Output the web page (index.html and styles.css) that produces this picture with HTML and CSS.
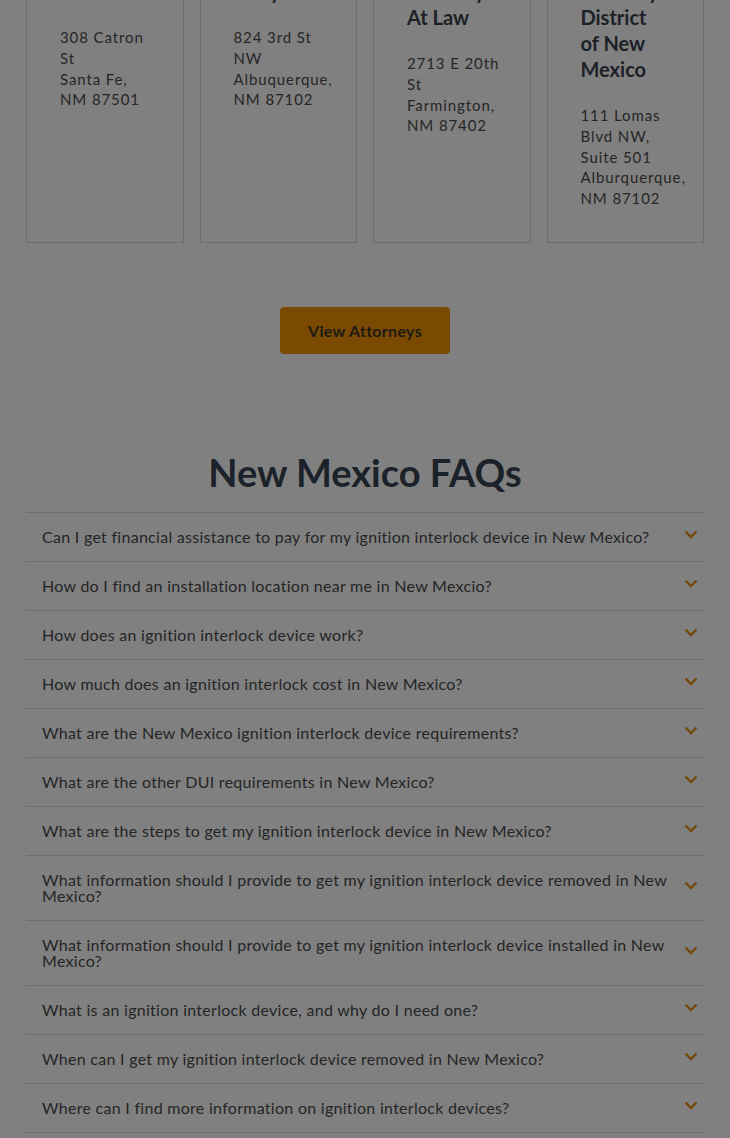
FILE: index.html
```html
<!DOCTYPE html>
<html lang="en">
<head>
<meta charset="utf-8">
<title>New Mexico Ignition Interlock</title>
<link rel="stylesheet" href="styles.css">
</head>
<body>
<main class="page">
  <section class="offices">
    <article class="card">
      <h3 class="card-title">Law Office</h3>
      <p class="addr"><span class="ln">308 Catron St</span><span class="ln">Santa Fe,</span><span class="ln">NM 87501</span></p>
    </article>
    <article class="card">
      <h3 class="card-title">DWI Lawyers</h3>
      <p class="addr"><span class="ln">824 3rd St NW</span><span class="ln">Albuquerque,</span><span class="ln">NM 87102</span></p>
    </article>
    <article class="card">
      <h3 class="card-title">Jones Attorney At Law</h3>
      <p class="addr"><span class="ln">2713 E 20th St</span><span class="ln">Farmington,</span><span class="ln">NM 87402</span></p>
    </article>
    <article class="card">
      <h3 class="card-title">US Attorney District of New Mexico</h3>
      <p class="addr"><span class="ln">111 Lomas Blvd NW, Suite 501</span><span class="ln">Alburquerque,</span><span class="ln">NM 87102</span></p>
    </article>
  </section>

  <div class="cta">
    <a class="btn" href="#">View Attorneys</a>
  </div>

  <section class="faqs">
    <h2 class="faqs-title">New Mexico FAQs</h2>
    <ul class="faq-list">
      <li class="faq"><span class="q">Can I get financial assistance to pay for my ignition interlock device in New Mexico?</span><svg class="chev" viewBox="0 0 14 9"><path d="M1.5 1.5 L7 7 L12.5 1.5"/></svg></li>
      <li class="faq"><span class="q">How do I find an installation location near me in New Mexcio?</span><svg class="chev" viewBox="0 0 14 9"><path d="M1.5 1.5 L7 7 L12.5 1.5"/></svg></li>
      <li class="faq"><span class="q">How does an ignition interlock device work?</span><svg class="chev" viewBox="0 0 14 9"><path d="M1.5 1.5 L7 7 L12.5 1.5"/></svg></li>
      <li class="faq"><span class="q">How much does an ignition interlock cost in New Mexico?</span><svg class="chev" viewBox="0 0 14 9"><path d="M1.5 1.5 L7 7 L12.5 1.5"/></svg></li>
      <li class="faq"><span class="q">What are the New Mexico ignition interlock device requirements?</span><svg class="chev" viewBox="0 0 14 9"><path d="M1.5 1.5 L7 7 L12.5 1.5"/></svg></li>
      <li class="faq"><span class="q">What are the other DUI requirements in New Mexico?</span><svg class="chev" viewBox="0 0 14 9"><path d="M1.5 1.5 L7 7 L12.5 1.5"/></svg></li>
      <li class="faq"><span class="q">What are the steps to get my ignition interlock device in New Mexico?</span><svg class="chev" viewBox="0 0 14 9"><path d="M1.5 1.5 L7 7 L12.5 1.5"/></svg></li>
      <li class="faq"><span class="q">What information should I provide to get my ignition interlock device removed in New Mexico?</span><svg class="chev" viewBox="0 0 14 9"><path d="M1.5 1.5 L7 7 L12.5 1.5"/></svg></li>
      <li class="faq"><span class="q">What information should I provide to get my ignition interlock device installed in New Mexico?</span><svg class="chev" viewBox="0 0 14 9"><path d="M1.5 1.5 L7 7 L12.5 1.5"/></svg></li>
      <li class="faq"><span class="q">What is an ignition interlock device, and why do I need one?</span><svg class="chev" viewBox="0 0 14 9"><path d="M1.5 1.5 L7 7 L12.5 1.5"/></svg></li>
      <li class="faq"><span class="q">When can I get my ignition interlock device removed in New Mexico?</span><svg class="chev" viewBox="0 0 14 9"><path d="M1.5 1.5 L7 7 L12.5 1.5"/></svg></li>
      <li class="faq"><span class="q">Where can I find more information on ignition interlock devices?</span><svg class="chev" viewBox="0 0 14 9"><path d="M1.5 1.5 L7 7 L12.5 1.5"/></svg></li>
    </ul>
  </section>
</main>
</body>
</html>
```

FILE: styles.css
```css
html, body {
  margin: 0;
  padding: 0;
  background: #808080;
}
body {
  font-family: "Lato", "Open Sans", sans-serif;
  color: #252525;
  overflow: hidden;
}
.page {
  padding: 0 26px;
}
.offices {
  display: grid;
  grid-template-columns: repeat(4, 1fr);
  column-gap: 16px;
  margin-top: -82px;
}
.card {
  border: 1px solid #6c6c6c;
  padding: 33px 29px 33px 33px;
  min-width: 0;
}
.card-title {
  max-width: 86px;
  margin: 0 0 23px;
  font-size: 20px;
  line-height: 26px;
  font-weight: 700;
  color: #1c2128;
}
.addr {
  margin: 0;
  font-size: 15px;
  line-height: 20.8px;
  letter-spacing: 0.9px;
  color: #262626;
}
.ln {
  display: block;
}
.cta {
  display: flex;
  justify-content: center;
  margin-top: 64px;
}
.btn {
  display: flex;
  align-items: center;
  justify-content: center;
  width: 170px;
  height: 47px;
  box-sizing: border-box;
  background: #7a4a02;
  border-radius: 4px;
  color: #1d1a14;
  font-weight: 700;
  font-size: 16px;
  letter-spacing: 0.3px;
  text-decoration: none;
}
.faqs {
  margin-top: 97px;
}
.faqs-title {
  margin: 0 0 18px;
  text-align: center;
  font-size: 38px;
  line-height: 43px;
  font-weight: 700;
  color: #1c2229;
}
.faq-list {
  list-style: none;
  margin: 0;
  padding: 0;
  border-top: 1px solid #6e6e6e;
}
.faq {
  display: flex;
  align-items: center;
  justify-content: space-between;
  gap: 10px;
  padding: 16px 6px 16px 16px;
  border-bottom: 1px solid #6e6e6e;
}
.q {
  font-size: 16px;
  line-height: 16px;
  letter-spacing: 0.28px;
  color: #252525;
}
.chev {
  flex: none;
  width: 14px;
  height: 9px;
  margin-top: -5px;
  fill: none;
  stroke: #74480a;
  stroke-width: 2.4;
}
```
